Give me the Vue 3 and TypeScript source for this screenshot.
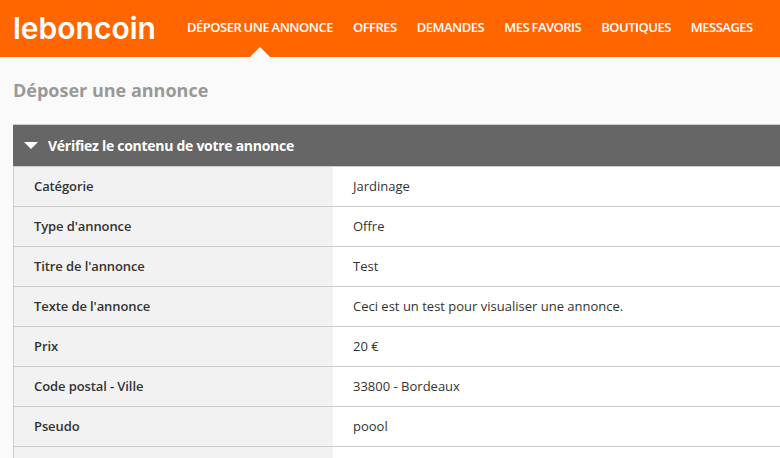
<script setup lang="ts">
interface Row {
  label: string;
  value: string;
}

const links = ["Déposer une annonce", "Offres", "Demandes", "Mes favoris", "Boutiques", "Messages"];

const rows: Row[] = [
  { label: "Catégorie", value: "Jardinage" },
  { label: "Type d'annonce", value: "Offre" },
  { label: "Titre de l'annonce", value: "Test" },
  { label: "Texte de l'annonce", value: "Ceci est un test pour visualiser une annonce." },
  { label: "Prix", value: "20 €" },
  { label: "Code postal - Ville", value: "33800 - Bordeaux" },
  { label: "Pseudo", value: "poool" },
  { label: "", value: "" },
];
</script>

<template>
  <div class="page">
    <header class="top">
      <div class="logo">leboncoin</div>
      <nav class="nav">
        <a v-for="(link, i) in links" :key="link" class="link" :class="{ active: i === 0 }">{{ link }}</a>
      </nav>
    </header>
    <main class="main">
      <h1 class="title">Déposer une annonce</h1>
      <section class="panel">
        <div class="head">
          <span class="arrow"></span>
          <span>Vérifiez le contenu de votre annonce</span>
        </div>
        <div v-for="(row, i) in rows" :key="i" class="row">
          <div class="label">{{ row.label }}</div>
          <div class="value">{{ row.value }}</div>
        </div>
      </section>
    </main>
  </div>
</template>

<style>
html, body { margin: 0; background: #fafafa; overflow: hidden; }
</style>

<style scoped>
.page { width: 780px; height: 458px; overflow: hidden; font-family: "Open Sans", sans-serif; font-size: 13px; color: #333; }
.top { height: 57px; background: #ff6600; display: flex; align-items: flex-start; padding-left: 13px; }
.logo { width: 174px; flex: none; font-family: Inter, sans-serif; font-weight: 600; font-size: 30px; line-height: 56px; color: #fff; }
.nav { display: flex; gap: 20px; }
.link { position: relative; line-height: 55px; font-size: 13px; font-weight: 600; text-transform: uppercase; letter-spacing: -0.5px; word-spacing: -0.5px; color: #fff; white-space: nowrap; }
.link.active::after { content: ""; position: absolute; left: 50%; bottom: -2px; margin-left: -10px; border: 10px solid transparent; border-top: 0; border-bottom-color: #fafafa; }
.main { padding: 0 0 0 13px; }
.title { margin: 0; height: 67px; font-size: 18px; line-height: 67px; font-weight: 700; color: #999; }
.panel { width: 900px; border-left: 1px solid #ccc; }
.head { display: flex; align-items: center; height: 41px; margin-left: -1px; background: #666; border-top: 1px solid #ccc; padding-left: 11px; color: #fff; font-size: 14px; font-weight: 700; letter-spacing: -0.28px; }
.arrow { width: 0; height: 0; margin-right: 10px; border-left: 7px solid transparent; border-right: 7px solid transparent; border-top: 7px solid #fff; }
.row { display: flex; box-sizing: border-box; height: 40px; border-top: 1px solid #ccc; background: #fff; line-height: 38px; }
.label { width: 299px; flex: none; padding-left: 20px; background: #f2f2f2; font-weight: 600; letter-spacing: -0.1px; color: #333; }
.value { padding-left: 20px; }
</style>
